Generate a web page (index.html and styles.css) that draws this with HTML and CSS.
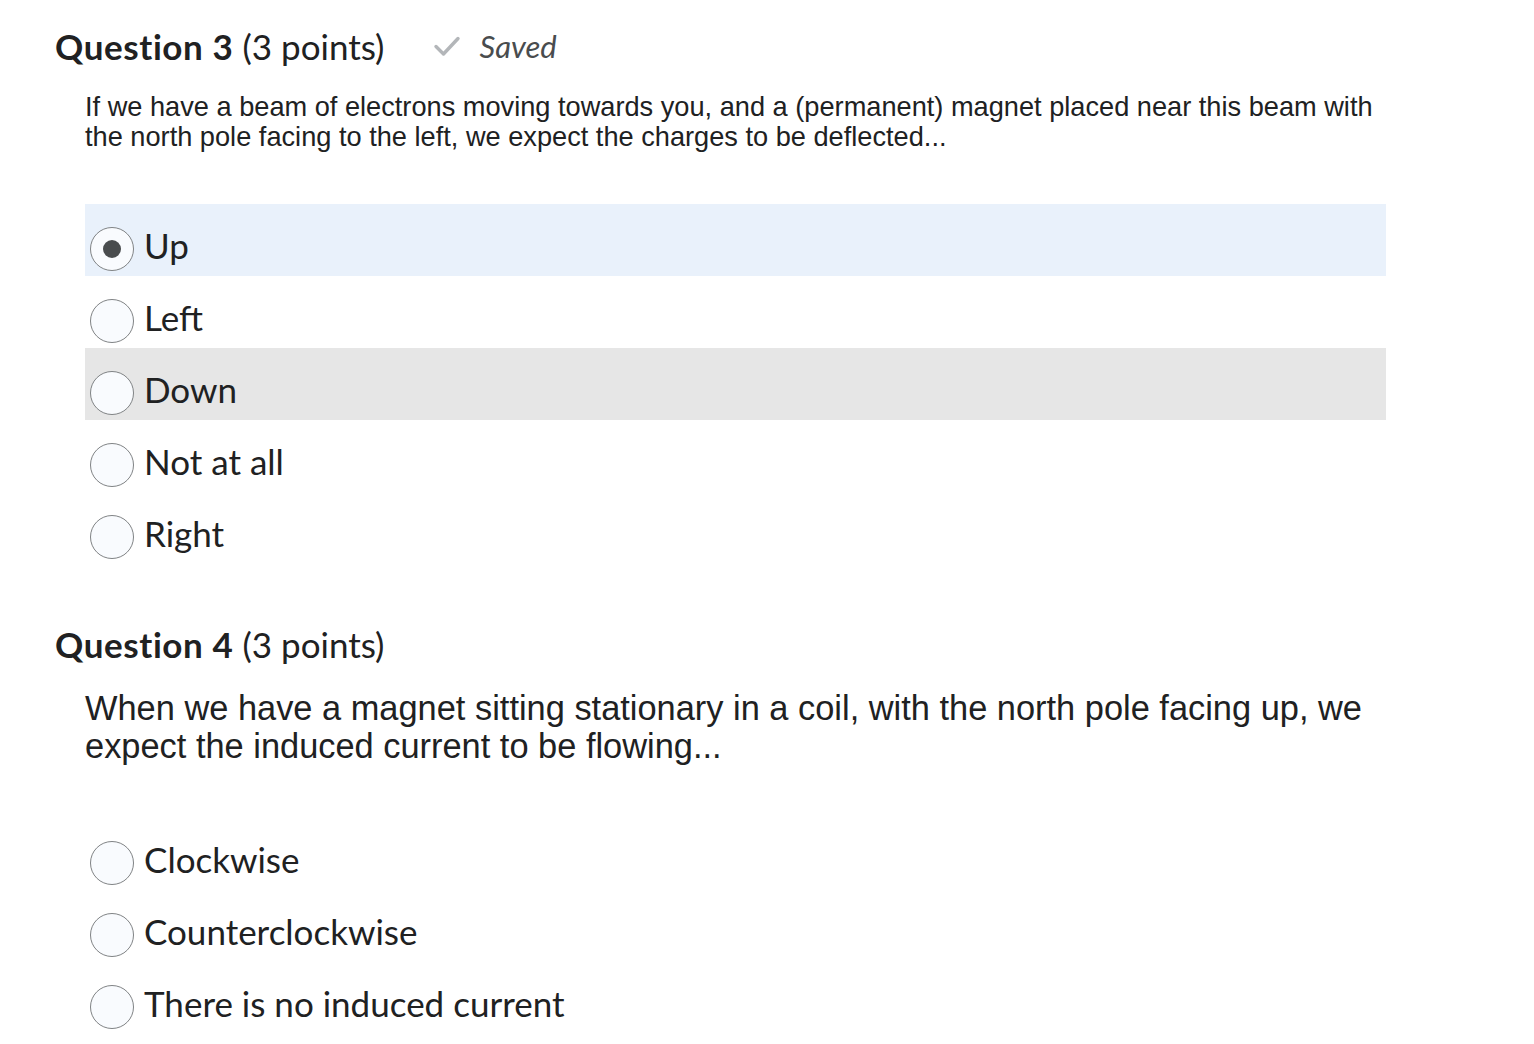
FILE: index.html
```html
<!DOCTYPE html>
<html lang="en">
<head>
<meta charset="utf-8">
<title>Quiz</title>
<link rel="stylesheet" href="styles.css">
</head>
<body>
<main class="quiz">
  <section class="question q3">
    <h2 class="q-head"><span class="q-title">Question 3</span><span class="q-points">(3 points)</span>
      <span class="saved"><svg class="check" viewBox="0 0 28 22" width="28" height="22"><path d="M3 11.5 L10.5 19 L25 3.5" fill="none" stroke="#b3b6b9" stroke-width="3.4" stroke-linecap="round" stroke-linejoin="round"/></svg><em>Saved</em></span>
    </h2>
    <p class="q-text small">If we have a beam of electrons moving towards you, and a (permanent) magnet placed near this beam with the north pole facing to the left, we expect the charges to be deflected...</p>
    <ul class="options first">
      <li class="opt selected"><span class="radio on"></span><span class="label">Up</span></li>
      <li class="opt"><span class="radio"></span><span class="label">Left</span></li>
      <li class="opt hover"><span class="radio"></span><span class="label">Down</span></li>
      <li class="opt"><span class="radio"></span><span class="label">Not at all</span></li>
      <li class="opt"><span class="radio"></span><span class="label">Right</span></li>
    </ul>
  </section>
  <section class="question q4">
    <h2 class="q-head"><span class="q-title">Question 4</span><span class="q-points">(3 points)</span></h2>
    <p class="q-text large">When we have a magnet sitting stationary in a coil, with the north pole facing up, we expect the induced current to be flowing...</p>
    <ul class="options second">
      <li class="opt"><span class="radio"></span><span class="label">Clockwise</span></li>
      <li class="opt"><span class="radio"></span><span class="label">Counterclockwise</span></li>
      <li class="opt"><span class="radio"></span><span class="label">There is no induced current</span></li>
    </ul>
  </section>
</main>
</body>
</html>
```
FILE: styles.css
```css
html, body {
  margin: 0;
  padding: 0;
  background: #ffffff;
}
body {
  font-family: Lato, "Liberation Sans", sans-serif;
  color: #202122;
}
.quiz {
  width: 1534px;
}
.q-head {
  margin: 0;
  padding-left: 55px;
  height: 40px;
  line-height: 40px;
  font-size: 35px;
  font-weight: 400;
  display: flex;
  align-items: center;
  white-space: nowrap;
}
.q3 .q-head {
  margin-top: 26px;
}
.q4 .q-head {
  margin-top: 60px;
}
.q-title {
  font-weight: 700;
  letter-spacing: 0.6px;
}
.q-points {
  margin-left: 9px;
  margin-right: 2px;
}
.saved {
  display: inline-flex;
  align-items: center;
  margin-left: 47px;
  color: #494c4e;
  font-size: 31px;
}
.check {
  margin-right: 18px;
}
.saved em {
  font-style: italic;
}
.q-text {
  margin: 0 0 0 85px;
  width: 1301px;
  font-family: "Liberation Sans", Arial, sans-serif;
  color: #202122;
}
.q-text.small {
  margin-top: 26px;
  font-size: 27.2px;
  line-height: 30px;
}
.q-text.large {
  margin-top: 25px;
  font-size: 34.4px;
  line-height: 38px;
}
.options {
  list-style: none;
  margin: 0 0 0 85px;
  padding: 0;
  width: 1301px;
}
.options.first {
  margin-top: 52px;
}
.options.second {
  margin-top: 53px;
}
.opt {
  height: 72px;
  display: flex;
  align-items: center;
  padding-left: 5px;
  box-sizing: border-box;
}
.opt.selected {
  background: #e9f1fb;
}
.opt.hover {
  background: #e6e6e6;
}
.radio {
  width: 44px;
  height: 44px;
  box-sizing: border-box;
  border: 1.3px solid #808385;
  border-radius: 50%;
  background: #f9fbfe;
  margin-top: 18px;
  flex: none;
  display: flex;
  align-items: center;
  justify-content: center;
}
.radio.on::after {
  content: "";
  width: 18px;
  height: 18px;
  border-radius: 50%;
  background: #494c4e;
}
.label {
  margin-left: 10px;
  margin-top: 10px;
  font-size: 35px;
  line-height: 40px;
  color: #202122;
}
```
